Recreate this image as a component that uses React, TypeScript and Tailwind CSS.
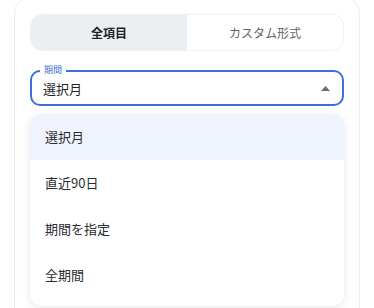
import { useState } from 'react';

const options = ['選択月', '直近90日', '期間を指定', '全期間'];

export default function App() {
  const [tab] = useState(0);
  const [selected] = useState(0);

  return (
    <div
      className="w-[374px] h-[308px] overflow-hidden bg-white"
      style={{ fontFamily: '"Noto Sans CJK JP", "Noto Sans", sans-serif' }}
    >
      <div className="mx-[14px] -mt-[3px] h-[330px] rounded-2xl border border-[#eceef0] bg-white px-[15px] pt-[16px]">
        {/* tabs */}
        <div className="flex h-[37px] rounded-xl border border-[#eef0f2] overflow-hidden">
          <button className={`flex-1 flex items-center justify-center text-[12px] ${tab === 0 ? 'bg-[#eceff1] font-bold text-[#1f2328]' : ''}`}>
            全項目
          </button>
          <button className="flex-1 flex items-center justify-center text-[12px] text-[#5f6368]">
            カスタム形式
          </button>
        </div>

        {/* select */}
        <div className="relative mt-[19px] h-[36px] rounded-[10px] border-2 border-[#3d6fd6] flex items-center pl-[11px] pr-[11px]">
          <span className="absolute -top-[8px] left-[8px] bg-white px-[4px] text-[9px] leading-[12px] text-[#3d6fd6]">
            期間
          </span>
          <span className="flex-1 text-[13px] text-[#1f2328] pt-[1px]">{options[selected]}</span>
          <svg width="9" height="5" viewBox="0 0 9 5" className="mr-[1px]">
            <path d="M0 5 L4.5 0 L9 5 Z" fill="#6b6b6b" />
          </svg>
        </div>

        {/* menu */}
        <div className="mt-[8px] pb-[8px] rounded-xl bg-white shadow-[0_2px_10px_rgba(0,0,0,0.10)] overflow-hidden">
          {options.map((o, i) => (
            <div
              key={o}
              className={`h-[46px] flex items-center pl-[15px] text-[13px] text-[#2a2d31] ${i === selected ? 'bg-[#eef3fd]' : ''}`}
            >
              {o}
            </div>
          ))}
        </div>
      </div>
    </div>
  );
}
